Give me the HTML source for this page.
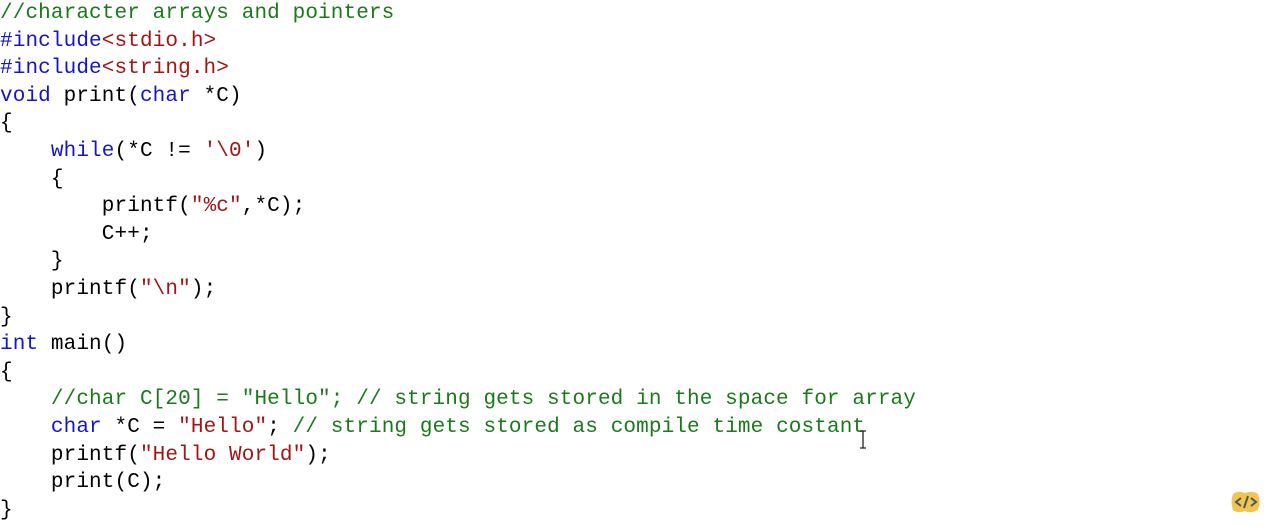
<!DOCTYPE html>
<html><head><meta charset="utf-8"><style>
html,body{margin:0;padding:0;background:#fff;width:1268px;height:531px;overflow:hidden}
pre{position:absolute;left:0;top:0px;margin:0;font-family:"Liberation Mono",monospace;font-size:21px;letter-spacing:0.12px;line-height:27.6px;color:#000}
.c{color:#1a7a1a}.k{color:#1515c8}.s{color:#a31515}
</style></head><body>
<pre><span class="c">//character arrays and pointers</span>
<span class="k">#include</span><span class="s">&lt;stdio.h&gt;</span>
<span class="k">#include</span><span class="s">&lt;string.h&gt;</span>
<span class="k">void</span> print(<span class="k">char</span> *C)
{
    <span class="k">while</span>(*C != <span class="s">'\0'</span>)
    {
        printf(<span class="s">"%c"</span>,*C);
        C++;
    }
    printf(<span class="s">"\n"</span>);
}
<span class="k">int</span> main()
{
    <span class="c">//char C[20] = "Hello"; // string gets stored in the space for array</span>
    <span class="k">char</span> *C = <span class="s">"Hello"</span>; <span class="c">// string gets stored as compile time costant</span>
    printf(<span class="s">"Hello World"</span>);
    print(C);
}</pre>
<svg style="position:absolute;left:858px;top:430px" width="10" height="20" viewBox="0 0 10 20">
<path d="M2 1 H8 M5 1 V18 M2 18 H8" stroke="#222" stroke-width="1.3" fill="none"/>
</svg>
<svg style="position:absolute;left:1230px;top:490px" width="32" height="24" viewBox="0 0 32 24">
<path d="M3 4 Q8 0 15 3 Q22 0 28 4 Q31 12 28 20 Q20 24 15 21 Q8 24 3 20 Q0 12 3 4Z" fill="#f0c550"/>
<path d="M11 8 L6 12 L11 16 M21 8 L26 12 L21 16 M18 6 L14 18" stroke="#555" stroke-width="2" fill="none"/>
</svg>
</body></html>
